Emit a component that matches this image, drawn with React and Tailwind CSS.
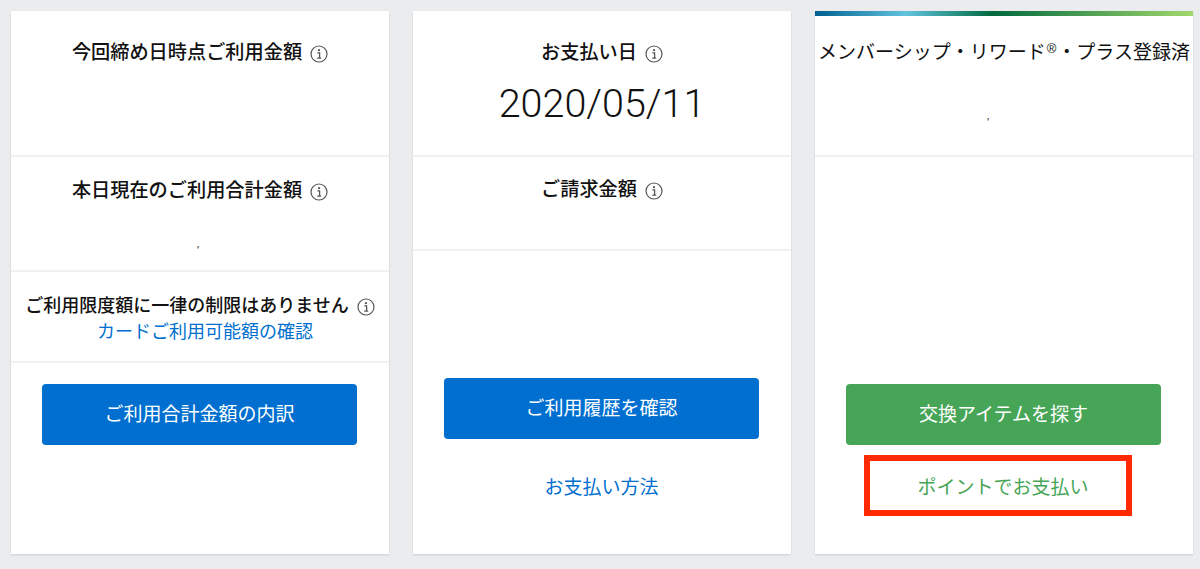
const jp = "font-['Liberation_Sans','Noto_Sans_CJK_JP',sans-serif]";

const InfoIcon = () => (
  <svg width="18" height="18" viewBox="0 0 18 18" fill="none" className="mt-[2px] shrink-0">
    <circle cx="9" cy="9" r="8" stroke="#555" strokeWidth="1.2" />
    <circle cx="9" cy="5.2" r="1.1" fill="#555" />
    <path d="M7.4 7.9H9.6V12.9M7.2 13.1H11.2" stroke="#555" strokeWidth="1.3" />
  </svg>
);

const Heading = ({ children, info = true, size = "text-[19.2px]", weight = "font-medium" }) => (
  <div className={`flex items-center justify-center gap-[8px] leading-[28px] text-[#111] ${size} ${weight}`}>
    <span className="whitespace-nowrap">{children}</span>
    {info && <InfoIcon />}
  </div>
);

const Mark = ({ className }) => <div className={`text-center text-[11px] leading-[10px] text-[#222] ${className}`}>′</div>;

const Button = ({ children, green }) => (
  <div
    className={`flex h-[61px] w-[315px] items-center justify-center rounded-[4px] pt-[2px] text-[19px] text-white ${
      green ? "bg-[#46a556]" : "bg-[#006fcf]"
    }`}
  >
    {children}
  </div>
);

const Card = ({ children }) => (
  <div className="flex h-[543px] w-[378px] flex-col bg-white shadow-[0_1px_2px_rgba(0,0,0,0.12)]">{children}</div>
);

export default function App() {
  return (
    <div className={`flex h-[569px] w-[1200px] gap-[24px] bg-[#eaecee] pl-[11px] pt-[11px] ${jp}`}>
      <Card>
        <div className="h-[146px] border-b-2 border-[#f0f1f2] pt-[28px]">
          <Heading>今回締め日時点ご利用金額</Heading>
        </div>
        <div className="h-[115px] border-b-2 border-[#f0f1f2] pt-[20px]">
          <Heading>本日現在のご利用合計金額</Heading>
          <Mark className="mt-[40px] pr-[4px]" />
        </div>
        <div className="h-[91px] border-b-2 border-[#f0f1f2] pt-[20px]">
          <Heading size="text-[18px]">ご利用限度額に一律の制限はありません</Heading>
          <div className="-mt-[1px] pl-[10px] text-center text-[18px] leading-[26px] text-[#006fcf]">カードご利用可能額の確認</div>
        </div>
        <div className="pl-[31px] pt-[21px]">
          <Button>ご利用合計金額の内訳</Button>
        </div>
      </Card>

      <Card>
        <div className="h-[146px] border-b-2 border-[#f0f1f2] pt-[28px]">
          <Heading>お支払い日</Heading>
          <div className="mt-[12px] text-center font-['Roboto',sans-serif] text-[39.5px] leading-[50px] font-light text-[#111]">
            2020/05/11
          </div>
        </div>
        <div className="h-[94px] border-b-2 border-[#f0f1f2] pt-[19px]">
          <Heading>ご請求金額</Heading>
        </div>
        <div className="pl-[31px] pt-[127px]">
          <Button>ご利用履歴を確認</Button>
          <div className="mt-[34px] w-[315px] text-center text-[19px] leading-[30px] text-[#006fcf]">お支払い方法</div>
        </div>
      </Card>

      <Card>
        <div className="h-[5px] bg-[linear-gradient(90deg,#00608f_0%,#62c3df_24%,#00693e_47%,#a2d86c_100%)]" />
        <div className="h-[141px] border-b-2 border-[#f0f1f2] pt-[23px]">
          <Heading info={false} size="text-[19px]" weight="font-normal">
            メンバーシップ・リワード<sup className="mx-[1px] text-[13px]">®</sup>・プラス登録済
          </Heading>
          <Mark className="mt-[50px] pr-[32px]" />
        </div>
        <div className="pl-[31px] pt-[227px]">
          <Button green>交換アイテムを探す</Button>
          <div className="ml-[18px] mt-[10px] flex h-[61px] w-[268px] items-center justify-center border-[6px] border-[#ff2a00] pl-[10px] pt-[5px] text-[19px] text-[#46a556]">
            ポイントでお支払い
          </div>
        </div>
      </Card>
    </div>
  );
}
